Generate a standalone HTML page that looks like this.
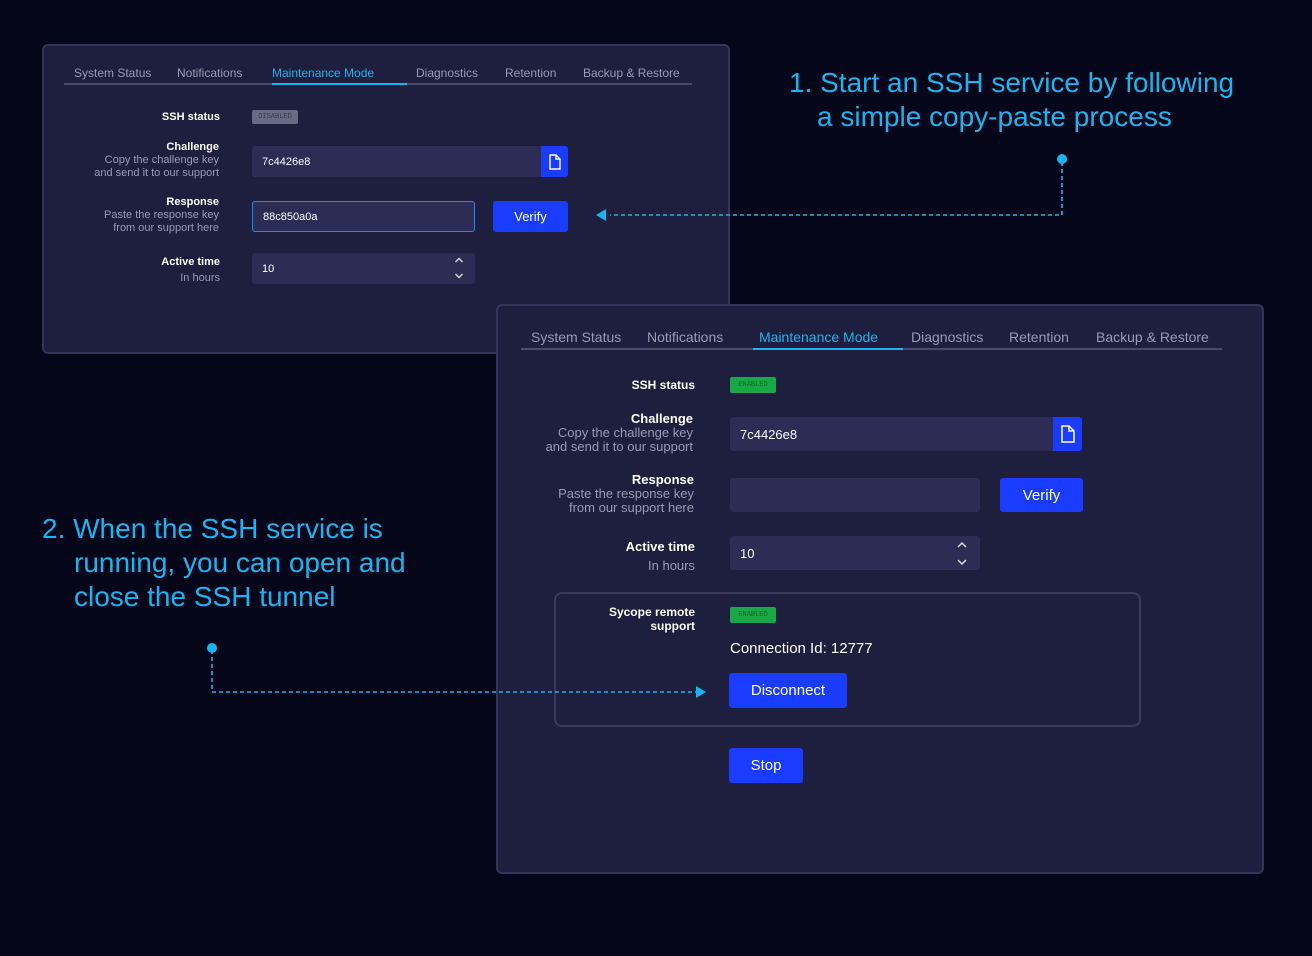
<!DOCTYPE html>
<html><head><meta charset="utf-8"><style>
*{margin:0;padding:0;box-sizing:border-box}
body{width:1312px;height:956px;background:#06061a;font-family:"Liberation Sans",sans-serif;position:relative;overflow:hidden;color:#fff}
.a{position:absolute}
.panel{position:absolute;background:#1e1e3e;border:2px solid #34345a;border-radius:6px}
.tabs{position:absolute;border-bottom:2px solid #4a4a6a;display:flex;color:#9a9ab4;white-space:nowrap}
.tabs span{display:block;padding:0 0 3px}
.tabs .on{color:#1ab4f0;border-bottom:2px solid #1ab4f0;margin-bottom:-2px}
.lbl{position:absolute;text-align:right;font-weight:bold;color:#fff}
.sub{font-weight:normal;color:#9a9ab4}
.inp{position:absolute;background:#2c2c54;border-radius:3px;color:#fff;padding-left:10px;display:flex;align-items:center}
.btn{position:absolute;background:#1a3cff;border-radius:3px;color:#fff;display:flex;align-items:center;justify-content:center}
.badge{position:absolute;font-family:"Liberation Mono",monospace;display:flex;align-items:center;justify-content:center;border-radius:2px}
.cy{color:#1ab4f0;position:absolute;font-size:28px;line-height:34px;white-space:nowrap}
.chev{position:absolute}
</style></head><body>

<div class="panel" style="left:42px;top:44px;width:688px;height:310px"></div>
<div class="tabs" style="left:64px;top:66px;width:628px;font-size:12px">
<span style="padding-left:10px;width:113px">System Status</span><span style="width:95px">Notifications</span><span class="on" style="width:135px">Maintenance Mode</span><span style="width:88px;padding-left:9px">Diagnostics</span><span style="width:78px;padding-left:10px">Retention</span><span style="padding-left:10px">Backup &amp; Restore</span></div>
<div class="lbl" style="left:100px;top:111px;width:120px;font-size:11px">SSH status</div>
<div class="badge" style="left:252px;top:110px;width:46px;height:14px;background:#6a6a84;color:#3a3a54;font-size:7px">DISABLED</div>
<div class="lbl" style="left:50px;top:141px;width:169px;font-size:11px;line-height:13px">Challenge<br><span class="sub">Copy the challenge key<br>and send it to our support</span></div>
<div class="inp" style="left:252px;top:146px;width:316px;height:31px;font-size:11px">7c4426e8</div>
<div class="btn" style="left:541px;top:146px;width:27px;height:31px;border-radius:0 3px 3px 0"><svg width="12" height="16" viewBox="0 0 12 16"><path d="M1 1h6l4 4v10H1zM7 1v4h4" fill="none" stroke="#fff" stroke-width="1.4"/></svg></div>
<div class="lbl" style="left:50px;top:196px;width:169px;font-size:11px;line-height:13px">Response<br><span class="sub">Paste the response key<br>from our support here</span></div>
<div class="inp" style="left:252px;top:201px;width:223px;height:31px;font-size:11px;border:1px solid #1a8cf0">88c850a0a</div>
<div class="btn" style="left:493px;top:201px;width:75px;height:31px;font-size:13px">Verify</div>
<div class="lbl" style="left:100px;top:254px;width:120px;font-size:11px;line-height:16px">Active time<br><span class="sub">In hours</span></div>
<div class="inp" style="left:252px;top:253px;width:223px;height:31px;font-size:11px">10</div>
<svg class="chev" style="left:454px;top:256px" width="10" height="24"><path d="M1.5 6L5 2.5 8.5 6M1.5 18L5 21.5 8.5 18" fill="none" stroke="#ddd" stroke-width="1.4"/></svg>

<div class="cy" style="left:789px;top:66px">1. Start an SSH service by following</div>
<div class="cy" style="left:817px;top:100px">a simple copy-paste process</div>
<svg class="a" style="left:590px;top:150px" width="480" height="75"><circle cx="472" cy="9" r="5" fill="#1ab4f0"/><path d="M472 12V65H20" fill="none" stroke="#1ab4f0" stroke-width="1.6" stroke-dasharray="4 3"/><path d="M6 65l10-6v12z" fill="#1ab4f0"/></svg>

<div class="panel" style="left:496px;top:304px;width:768px;height:570px"></div>
<div class="tabs" style="left:521px;top:329px;width:701px;font-size:14px">
<span style="padding-left:10px;width:126px">System Status</span><span style="width:106px">Notifications</span><span class="on" style="width:150px;padding-left:6px">Maintenance Mode</span><span style="width:98px;padding-left:8px">Diagnostics</span><span style="width:87px;padding-left:8px">Retention</span><span style="padding-left:8px">Backup &amp; Restore</span></div>
<div class="lbl" style="left:560px;top:378px;width:135px;font-size:12px">SSH status</div>
<div class="badge" style="left:730px;top:377px;width:46px;height:16px;background:#18a848;color:#0a6a2a;font-size:7px">ENABLED</div>
<div class="lbl" style="left:510px;top:412px;width:183px;font-size:13px;line-height:14px">Challenge<br><span class="sub">Copy the challenge key<br>and send it to our support</span></div>
<div class="inp" style="left:730px;top:417px;width:352px;height:34px;font-size:13px">7c4426e8</div>
<div class="btn" style="left:1053px;top:417px;width:29px;height:34px;border-radius:0 3px 3px 0"><svg width="14" height="18" viewBox="0 0 14 18"><path d="M1 1h7l5 5v11H1zM8 1v5h5" fill="none" stroke="#fff" stroke-width="1.5"/></svg></div>
<div class="lbl" style="left:510px;top:473px;width:184px;font-size:13px;line-height:14px">Response<br><span class="sub">Paste the response key<br>from our support here</span></div>
<div class="inp" style="left:730px;top:478px;width:250px;height:34px"></div>
<div class="btn" style="left:1000px;top:478px;width:83px;height:34px;font-size:15px">Verify</div>
<div class="lbl" style="left:560px;top:537px;width:135px;font-size:13px;line-height:19px">Active time<br><span class="sub">In hours</span></div>
<div class="inp" style="left:730px;top:536px;width:250px;height:34px;font-size:13px">10</div>
<svg class="chev" style="left:956px;top:540px" width="12" height="27"><path d="M2 7L6 3 10 7M2 20L6 24 10 20" fill="none" stroke="#ddd" stroke-width="1.5"/></svg>

<div class="a" style="left:554px;top:592px;width:587px;height:135px;border:2px solid #3a3a5e;border-radius:8px"></div>
<div class="lbl" style="left:560px;top:605px;width:135px;font-size:12px;line-height:14px">Sycope remote<br>support</div>
<div class="badge" style="left:730px;top:607px;width:46px;height:16px;background:#18a848;color:#0a6a2a;font-size:7px">ENABLED</div>
<div class="a" style="left:730px;top:640px;font-size:15px">Connection Id: 12777</div>
<div class="btn" style="left:729px;top:673px;width:118px;height:35px;font-size:15px">Disconnect</div>
<div class="btn" style="left:729px;top:748px;width:74px;height:35px;font-size:15px">Stop</div>

<div class="cy" style="left:42px;top:512px">2. When the SSH service is</div>
<div class="cy" style="left:74px;top:546px">running, you can open and</div>
<div class="cy" style="left:74px;top:580px">close the SSH tunnel</div>
<svg class="a" style="left:200px;top:640px" width="512" height="60"><circle cx="12" cy="8" r="5" fill="#1ab4f0"/><path d="M12 10V52H496" fill="none" stroke="#1ab4f0" stroke-width="1.6" stroke-dasharray="4 3"/><path d="M506 52l-10-6v12z" fill="#1ab4f0"/></svg>
</body></html>
